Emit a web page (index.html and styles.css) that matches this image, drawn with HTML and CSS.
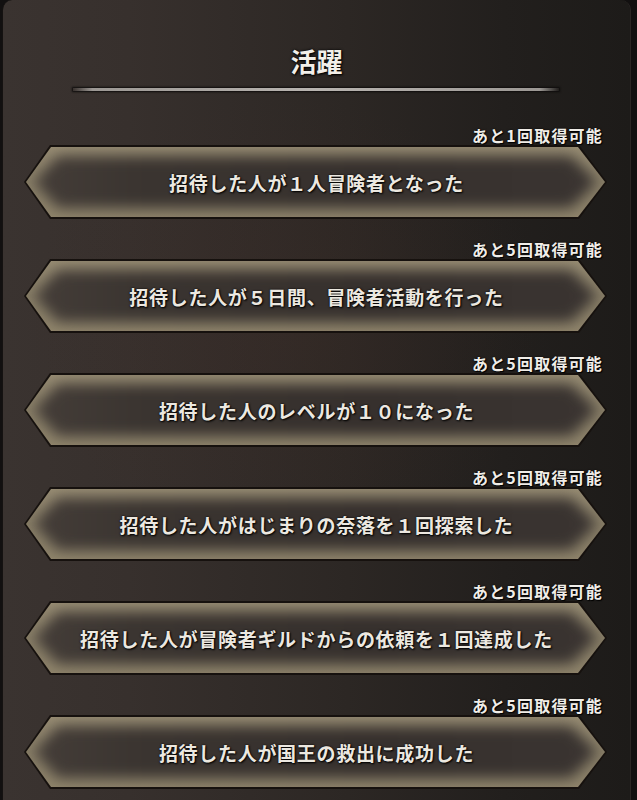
FILE: index.html
```html
<!DOCTYPE html>
<html lang="ja">
<head>
<meta charset="utf-8">
<title>活躍</title>
<link rel="stylesheet" href="styles.css">
</head>
<body>
<div class="panel">
  <div class="title">活躍</div>
  <div class="title-line"></div>
  <ul class="list">
    <li class="item">
      <div class="label">あと1回取得可能</div>
      <div class="btn">
        <div class="btn-edge"></div>
        <div class="btn-rim"><div class="btn-glow"><div class="btn-core"></div></div></div>
        <div class="btn-text">招待した人が１人冒険者となった</div>
      </div>
    </li>
    <li class="item">
      <div class="label">あと5回取得可能</div>
      <div class="btn">
        <div class="btn-edge"></div>
        <div class="btn-rim"><div class="btn-glow"><div class="btn-core"></div></div></div>
        <div class="btn-text">招待した人が５日間、冒険者活動を行った</div>
      </div>
    </li>
    <li class="item">
      <div class="label">あと5回取得可能</div>
      <div class="btn">
        <div class="btn-edge"></div>
        <div class="btn-rim"><div class="btn-glow"><div class="btn-core"></div></div></div>
        <div class="btn-text">招待した人のレベルが１０になった</div>
      </div>
    </li>
    <li class="item">
      <div class="label">あと5回取得可能</div>
      <div class="btn">
        <div class="btn-edge"></div>
        <div class="btn-rim"><div class="btn-glow"><div class="btn-core"></div></div></div>
        <div class="btn-text">招待した人がはじまりの奈落を１回探索した</div>
      </div>
    </li>
    <li class="item">
      <div class="label">あと5回取得可能</div>
      <div class="btn">
        <div class="btn-edge"></div>
        <div class="btn-rim"><div class="btn-glow"><div class="btn-core"></div></div></div>
        <div class="btn-text">招待した人が冒険者ギルドからの依頼を１回達成した</div>
      </div>
    </li>
    <li class="item">
      <div class="label">あと5回取得可能</div>
      <div class="btn">
        <div class="btn-edge"></div>
        <div class="btn-rim"><div class="btn-glow"><div class="btn-core"></div></div></div>
        <div class="btn-text">招待した人が国王の救出に成功した</div>
      </div>
    </li>
  </ul>
</div>
</body>
</html>
```
FILE: styles.css
```css
html, body {
  margin: 0;
  padding: 0;
  background: #121010;
}
body {
  width: 637px;
  height: 800px;
  overflow: hidden;
  font-family: "Noto Sans CJK JP", "Noto Sans", sans-serif;
  color: #ece8e0;
}
.panel {
  margin: 0 7px 0 2px;
  height: 812px;
  border-radius: 10px;
  border-left: 1px solid #151211;
  box-sizing: border-box;
  background:
    radial-gradient(ellipse 60% 40% at 45% 40%, rgba(70, 45, 38, 0.22), rgba(0,0,0,0) 70%),
    linear-gradient(90deg, #3a3330 0%, #37302d 20%, #2c2724 55%, #221f1d 80%, #1d1b19 100%);
  box-shadow: 1px 0 0 #2a2624;
  overflow: hidden;
}
.title {
  padding-top: 46px;
  height: 30px;
  line-height: 30px;
  text-align: center;
  font-size: 26px;
  font-weight: 700;
  color: #f2efe9;
  text-shadow: 0 0 3px #000, 1px 1px 2px #000;
}
.title-line {
  margin: 12px 0 0 70px;
  width: 486px;
  height: 3px;
  background: linear-gradient(90deg, rgba(190,186,182,0) 0%, #9c9894 4%, #b8b4b0 50%, #9c9894 96%, rgba(190,186,182,0) 100%);
  box-shadow: 0 0 2px 1px #0e0c0b;
}
.list {
  list-style: none;
  margin: 34px 0 0 0;
  padding: 0 23px 0 21px;
}
.item {
  margin-bottom: 20px;
}
.label {
  height: 20px;
  line-height: 20px;
  text-align: right;
  padding-right: 4px;
  font-size: 16px;
  font-weight: 700;
  letter-spacing: 1.2px;
  color: #f0ede8;
  text-shadow: 0 0 2px #000, 1px 1px 1px #000;
}
.btn {
  display: grid;
  height: 74px;
}
.btn > * {
  grid-area: 1 / 1;
}
.btn-edge {
  background: #16110e;
  clip-path: polygon(26px 0, calc(100% - 28px) 0, 100% 50%, calc(100% - 28px) 100%, 26px 100%, 0 50%);
}
.btn-rim {
  margin: 2px;
  display: flex;
  background: linear-gradient(180deg, #978c73 0%, #887e67 50%, #8f846b 100%);
  clip-path: polygon(25px 0, calc(100% - 27px) 0, 100% 50%, calc(100% - 27px) 100%, 25px 100%, 0 50%);
}
.btn-glow {
  flex: 1;
  display: flex;
  filter: blur(7px);
}
.btn-core {
  flex: 1;
  margin: 9px 8px;
  background: linear-gradient(90deg, #443d38 0%, #3a3430 20%, #36302d 60%, #3a3431 100%);
  clip-path: polygon(24px 0, calc(100% - 26px) 0, 100% 50%, calc(100% - 26px) 100%, 24px 100%, 0 50%);
}
.btn-text {
  z-index: 1;
  align-self: center;
  justify-self: center;
  font-size: 19px;
  font-weight: 700;
  letter-spacing: 0.7px;
  color: #ece8e0;
  text-shadow: 0 0 2px #000, 1px 1px 2px #000;
  margin-left: 2px;
}
```
